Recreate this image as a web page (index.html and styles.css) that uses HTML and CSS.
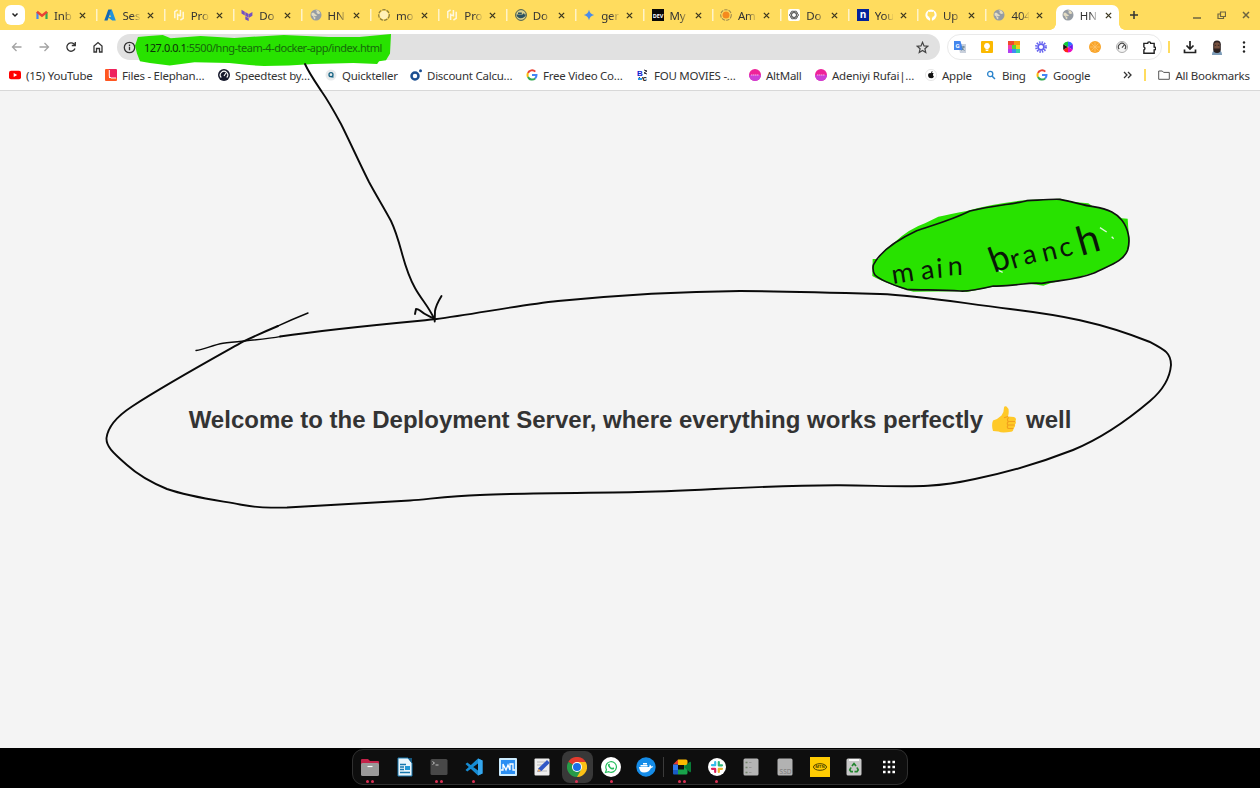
FILE: index.html
```html
<!DOCTYPE html>
<html lang="en">
<head>
<meta charset="utf-8">
<title>HNG</title>
<link rel="stylesheet" href="styles.css">
</head>
<body>
<svg class="defs" aria-hidden="true">
  <symbol id="x" viewBox="0 0 8 8"><path d="M1 1l6 6M7 1L1 7" fill="none" stroke="currentColor" stroke-width="1.5"/></symbol>
  <symbol id="globe" viewBox="0 0 12 12"><circle cx="6" cy="6" r="5.5" fill="#969ca3"/><path d="M1.6 4.2C3 3.6 4.500 3.800 4.800 5L7 6.200 6 7.200 3.500 6.800 5.500 8.500 5 10.500 3.600 9.200 3.300 7.400 1.500 6.300zM5.500 1.200L8.500 1.600 10.400 4.200 8.800 5 7.600 4.800 6.400 3.600 7 2.800z" fill="#e3dcc4"/></symbol>
  <symbol id="hashi" viewBox="0 0 12 12"><path d="M4.600 1L1.800 2.700V9.200M4.600 4.500V11M7.400 1v6.500M4.600 6.200h2.800M7.400 11l2.800-1.700V2.800" fill="none" stroke="#fff8df" stroke-width="1.500"/></symbol>
  <symbol id="google" viewBox="0 0 12 12"><g fill="none" stroke-width="2"><path d="M9.300 2.600A4.500 4.500 0 0 0 2 4" stroke="#ea4335"/><path d="M2 4a4.500 4.500 0 0 0 0 4" stroke="#fbbc05"/><path d="M2 8a4.500 4.500 0 0 0 7.100 1.400" stroke="#34a853"/><path d="M9.100 9.400A4.500 4.500 0 0 0 10.500 6H6" stroke="#4285f4"/></g></symbol>
  <symbol id="alt" viewBox="0 0 12 12"><circle cx="6" cy="6" r="6" fill="#ee2299"/><path d="M0 6h12a6 6 0 0 1-12 0" fill="#cc3fd6"/><path d="M2 6h8" stroke="#f7b6e6" stroke-width="1" stroke-dasharray="1.500 .5"/></symbol>
</svg>

<header class="browser">
  <div class="tabstrip">
    <button class="search-tabs"><svg width="8" height="6" viewBox="0 0 8 6"><path d="M1.500 1.500L4 4l2.500-2.500" fill="none" stroke="#222" stroke-width="1.500"/></svg></button>
    <div class="tabs">
      <div class="tab"><svg class="fav" viewBox="0 0 12 12"><path d="M1.500 10V3" stroke="#4285f4" stroke-width="2.200"/><path d="M10.500 10V3" stroke="#34a853" stroke-width="2.200"/><path d="M1 2.700L6 6.700l5-4" fill="none" stroke="#ea4335" stroke-width="2.400"/></svg><span>Inb</span><svg class="close"><use href="#x"/></svg></div>
      <div class="tab"><svg class="fav" viewBox="0 0 12 12"><path d="M4.300.5h3.500L3.500 11.500H.3z" fill="#1267b4"/><path d="M7.800.5l4 11H8.200L3.600 8h3.300L5.500 4z" fill="#2192dc"/></svg><span>Ses</span><svg class="close"><use href="#x"/></svg></div>
      <div class="tab"><svg class="fav"><use href="#hashi"/></svg><span>Pro</span><svg class="close"><use href="#x"/></svg></div>
      <div class="tab"><svg class="fav" viewBox="0 0 12 12" fill="#7350c4"><path d="M.5.8l3.300 2v3.700l-3.300-2zM4.300 3l3.400 2v3.700l-3.400-2zM8 5l3.400-2v3.700L8 8.700zM4.300 7.200l3.400 2V12l-3.400-1.500z"/></svg><span>Do</span><svg class="close"><use href="#x"/></svg></div>
      <div class="tab"><svg class="fav"><use href="#globe"/></svg><span>HN</span><svg class="close"><use href="#x"/></svg></div>
      <div class="tab"><svg class="fav" viewBox="0 0 12 12"><circle cx="6" cy="6" r="4.200" fill="#fff0b8"/><circle cx="6" cy="6" r="5.300" fill="none" stroke="#8a7c3e" stroke-width="1.200" stroke-dasharray="3.500 1"/></svg><span>mo</span><svg class="close"><use href="#x"/></svg></div>
      <div class="tab"><svg class="fav"><use href="#hashi"/></svg><span>Pro</span><svg class="close"><use href="#x"/></svg></div>
      <div class="tab"><svg class="fav" viewBox="0 0 12 12"><circle cx="6" cy="6" r="5.400" fill="#d9cf8d" stroke="#475d50"/><path d="M1.500 5.500h6l1.500-1.500.5 1.500h1.500C10 8.500 7.500 9.500 5 9.200 3 9 1.700 7.500 1.500 5.500zM3 4.900V3.600h3.800v1.300z" fill="#2b5262"/></svg><span>Do</span><svg class="close"><use href="#x"/></svg></div>
      <div class="tab"><svg class="fav" viewBox="0 0 12 12"><path d="M6 .8C6.800 4 8 5.200 11.200 6 8 6.800 6.800 8 6 11.200 5.200 8 4 6.800.8 6 4 5.200 5.200 4 6 .8z" fill="#4b8be8"/></svg><span>gen</span><svg class="close"><use href="#x"/></svg></div>
      <div class="tab"><svg class="fav" viewBox="0 0 12 12"><path fill="#080808" d="M0 0h12v12H0z"/><text x="6" y="8.500" class="dev">DEV</text></svg><span>My</span><svg class="close"><use href="#x"/></svg></div>
      <div class="tab"><svg class="fav" viewBox="0 0 12 12"><circle cx="6" cy="6" r="5.300" fill="none" stroke="#a08a4c" stroke-width="1.100" stroke-dasharray="3.500 1"/><circle cx="6" cy="6" r="3.500" fill="#f58a1f"/></svg><span>Am</span><svg class="close"><use href="#x"/></svg></div>
      <div class="tab"><svg class="fav" viewBox="0 0 12 12"><rect width="12" height="12" rx="2" fill="#fff"/><g fill="none" stroke="#444" stroke-width=".8"><ellipse cx="6" cy="6" rx="4.400" ry="2.300"/><ellipse cx="6" cy="6" rx="4.400" ry="2.300" transform="rotate(60 6 6)"/><ellipse cx="6" cy="6" rx="4.400" ry="2.300" transform="rotate(120 6 6)"/></g></svg><span>Do</span><svg class="close"><use href="#x"/></svg></div>
      <div class="tab"><svg class="fav" viewBox="0 0 12 12"><path fill="#03229c" d="M0 0h12v12H0z"/><text x="6" y="9" class="n">n</text></svg><span>You</span><svg class="close"><use href="#x"/></svg></div>
      <div class="tab"><svg class="fav" viewBox="0 0 12 12"><path d="M4.500 11.500V9.300C2.500 9.700 2.300 8.500 1.500 8.200M7.500 11.500V8.500" stroke="#fff" fill="none" stroke-width="1.200"/><path d="M4 11.300A5.600 5.600 0 1 1 8 11.300V9c0-.6-.2-1-.5-1.200C9.200 7.500 9.600 6.400 9.600 5.200c0-.6-.2-1-.6-1.400.1-.4.100-.9-.1-1.300-.5 0-1 .3-1.400.6a5 5 0 0 0-3 0C4.100 2.800 3.600 2.500 3.100 2.500c-.2.400-.2.900-.1 1.300-.4.400-.6.800-.6 1.400 0 1.200.4 2.300 2.100 2.600-.5.500-.5 1-.5 1.500z" fill="#fff"/></svg><span>Up</span><svg class="close"><use href="#x"/></svg></div>
      <div class="tab"><svg class="fav"><use href="#globe"/></svg><span>404</span><svg class="close"><use href="#x"/></svg></div>
      <div class="tab active"><svg class="fav"><use href="#globe"/></svg><span>HN</span><svg class="close"><use href="#x"/></svg></div>
    </div>
    <svg class="plus" viewBox="0 0 10 10"><path d="M5 1v8M1 5h8" stroke="#333" stroke-width="1.500"/></svg>
    <div class="window-buttons">
      <svg width="8" height="10"><path d="M0 8h8" stroke="#6e6541" stroke-width="1.500"/></svg>
      <svg width="9" height="10" fill="none" stroke="#6e6541" stroke-width="1.200"><path d="M3.500 2h5v4.500h-5zM3.500 4H1v4.500h5.500v-2"/></svg>
      <svg width="8" height="8" class="wclose"><use href="#x"/></svg>
    </div>
  </div>

  <div class="toolbar">
    <nav class="nav">
      <svg viewBox="0 0 12 12"><path d="M10.500 6H2M5.500 2L1.500 6l4 4" stroke="#a3a3a3"/></svg>
      <svg viewBox="0 0 12 12"><path d="M1.500 6H10M6.500 2l4 4-4 4" stroke="#a3a3a3"/></svg>
      <svg viewBox="0 0 12 12"><path d="M10 7.500A4.200 4.200 0 1 1 9 3L10.300 4.300M10.300 1v3.500H6.800" stroke="#333"/></svg>
      <svg viewBox="0 0 12 12"><path d="M2 11V5l4-3.500L10 5v6H7.500V7.500h-3V11z" stroke="#333"/></svg>
    </nav>
    <div class="omnibox">
      <svg class="marker" viewBox="0 0 258 34" preserveAspectRatio="none"><path d="M3 3L14 2 28 1 36 4.500 66 2 100 4 150 1 195 3 226 3 258 0 257 20 253 27 246 28 244 31 220 30 180 31 155 32.500 130 33 115 32 95 30 60 29 35 32.500 15 30 5 28 2 20 0 12z"/></svg>
      <svg class="info" viewBox="0 0 12 12"><circle cx="6" cy="6" r="4.800" fill="none" stroke="#333" stroke-width="1.200"/><path d="M6 5.400v3.200M6 3.200v1.300" stroke="#333" stroke-width="1.200"/></svg>
      <span class="url"><b>127.0.0.1</b>:5500/hng-team-4-docker-app/index.html</span>
      <svg class="star" viewBox="0 0 12 12"><path d="M6 1.200l1.400 3.300 3.500.3-2.700 2.300.8 3.500L6 8.700 3 10.600l.8-3.500L1.100 4.800l3.500-.3z" fill="none" stroke="#444" stroke-width="1.100"/></svg>
    </div>
    <div class="extensions">
      <svg viewBox="0 0 12 12"><path fill="#c9d0dc" d="M4 3h8v9H6z"/><path fill="#4386ee" d="M0 0h6.500l2.500 9H0z"/><text x="3.600" y="7" class="tr">G</text><path d="M7.500 6H11M9.200 5v1c0 1.500-1 3-1.700 3.500M8 7.500l2.500 2" fill="none" stroke="#607d8b" stroke-width=".8"/></svg>
      <svg viewBox="0 0 12 12"><rect width="12" height="12" rx="1" fill="#fbb900"/><path d="M6 2a3 3 0 0 0-1.500 5.600V8.500h3V7.600A3 3 0 0 0 6 2zM4.700 9.100h2.600v1H4.700z" fill="#fff"/></svg>
      <svg viewBox="0 0 12 12"><path fill="#f04a2a" d="M0 0h6v4H0z"/><path fill="#f79a10" d="M6 0h6v4H6z"/><path fill="#f23fae" d="M0 4h4v4H0z"/><path fill="#53d63c" d="M4 4h4v4H4z"/><path fill="#f4d31c" d="M8 4h4v4H8z"/><path fill="#b13ff0" d="M0 8h4v4H0z"/><path fill="#3e89f5" d="M4 8h4v4H4z"/><path fill="#35d6a5" d="M8 8h4v4H8z"/></svg>
      <svg viewBox="0 0 12 12"><circle cx="6" cy="6" r="4.700" fill="none" stroke="#6562ef" stroke-width="2.400" stroke-dasharray="1.400 1.060"/><circle cx="6" cy="6" r="2.900" fill="none" stroke="#6562ef" stroke-width="1.700"/></svg>
      <svg viewBox="0 0 12 12"><path d="M6 6V.5a5.500 5.500 0 0 1 4.800 2.800z" fill="#2a70ff"/><path d="M6 6l4.800-2.700v5.400z" fill="#6b18ef"/><path d="M6 6l4.800 2.700A5.500 5.500 0 0 1 6 11.500z" fill="#ea0bc0"/><path d="M6 6v5.500a5.500 5.500 0 0 1-4.800-2.800z" fill="#ff211b"/><path d="M6 6L1.200 8.700V3.300z" fill="#201414"/><path d="M6 6L1.200 3.300A5.500 5.500 0 0 1 6 .5z" fill="#0fcc39"/></svg>
      <svg viewBox="0 0 12 12"><circle cx="6" cy="6" r="6" fill="#f9a52b"/><g stroke="#ffc773" stroke-width=".7"><path d="M6 1v10M1 6h10M2.500 2.500l7 7M9.500 2.500l-7 7"/></g></svg>
      <svg viewBox="0 0 12 12"><circle cx="6" cy="6" r="5.500" fill="#f4f4f4" stroke="#999" stroke-width=".8"/><path d="M3.200 8.200a3.600 3.600 0 1 1 5.600 0M6 6.600L8.200 4" fill="none" stroke="#444" stroke-width="1.100"/></svg>
      <svg viewBox="0 0 12 12"><path d="M.8 2.200h3.500a1.400 1.400 0 0 1 2.800 0h3.200v3.300a1.400 1.400 0 0 1 0 2.800v3H.8V8.300a1.500 1.500 0 0 0 0-2.800z" fill="none" stroke="#222" stroke-width="1.300"/></svg>
    </div>
    <i class="bar"></i>
    <svg class="download" viewBox="0 0 14 14"><path d="M7 1v7.500M3.500 5.500L7 9l3.500-3.500M1.500 9.500v3h11v-3" fill="none" stroke="#222" stroke-width="1.700"/></svg>
    <svg class="avatar" viewBox="0 0 12 15"><path d="M1 15c0-4 2-5 5-5s5 1 5 5z" fill="#7d9cb8"/><rect x="2.200" y=".5" width="7.600" height="12.500" rx="3.800" fill="#2c2120"/><path d="M3.200 4.500c0-3 5.600-3 5.600 0V8.500H3.200z" fill="#77513f"/><path d="M3.700 5.300h1.500M6.800 5.300h1.500" stroke="#302421"/></svg>
    <svg class="dots" viewBox="0 0 4 12" fill="#222"><circle cx="2" cy="1.500" r="1.200"/><circle cx="2" cy="6" r="1.200"/><circle cx="2" cy="10.500" r="1.200"/></svg>
  </div>

  <div class="bookmarks">
    <a><svg viewBox="0 0 12 12"><rect y="1.700" width="12" height="8.600" rx="2" fill="#f00"/><path d="M4.700 4l3.500 2-3.500 2z" fill="#fff"/></svg><span>(15) YouTube</span></a>
    <a><svg viewBox="0 0 12 12"><path d="M0 1q0-1 1-1h3v9h8v2q0 1-1 1H1q-1 0-1-1z" fill="#ff5722"/><path d="M4 0h7q1 0 1 1v8H6L4 7z" fill="#ee225e"/><path d="M4.300 1v6.500L6 9h5" fill="none" stroke="#fff"/></svg><span>Files - Elephan…</span></a>
    <a><svg viewBox="0 0 12 12"><circle cx="6" cy="6" r="6" fill="#171a2d"/><path d="M3.300 8.500a3.700 3.700 0 1 1 5.400 0M6 7l2-3" fill="none" stroke="#fff" stroke-width="1.100"/></svg><span>Speedtest by…</span></a>
    <a><svg viewBox="0 0 12 12"><circle cx="6" cy="6" r="5.500" fill="#e9ebec"/><circle cx="6" cy="5.700" r="2" fill="none" stroke="#176383" stroke-width="1.300"/><path d="M6.500 8h2.200" stroke="#176383"/></svg><span>Quickteller</span></a>
    <a><svg viewBox="0 0 12 12"><circle cx="5" cy="7" r="3.500" fill="none" stroke="#1c4f91" stroke-width="2.500"/><circle cx="10.500" cy="1.700" r="1.500" fill="#1c4f91"/></svg><span>Discount Calcu…</span></a>
    <a><svg><use href="#google"/></svg><span>Free Video Co…</span></a>
    <a><svg viewBox="0 0 12 12"><text x="0" y="6.500" class="fou blue">B</text><text x="5.500" y="11.500" class="fou">c</text><path d="M7 1l3 1-3 2 3 1M2 8l2 3 2-3" stroke="#223" fill="none"/><path d="M1 9h4v2H1z" fill="#269ae8"/></svg><span>FOU MOVIES -…</span></a>
    <a><svg><use href="#alt"/></svg><span>AltMall</span></a>
    <a><svg><use href="#alt"/></svg><span>Adeniyi Rufai|…</span></a>
    <a><svg viewBox="0 0 12 12"><circle cx="6" cy="6" r="5.600" fill="#fff" stroke="#ddd" stroke-width=".7"/><path d="M6 4.200c.8-.5 2-.5 2.600.3-1 .8-.8 2.300.3 2.800C8.400 9 7.300 9.600 6 9 4.300 9.700 3.100 8 3.100 6.300 3.100 4.200 4.700 3.600 6 4.200zM6 3.800c0-1 .6-1.700 1.500-1.900.1 1-.6 1.800-1.500 1.900z" fill="#111"/></svg><span>Apple</span></a>
    <a><svg viewBox="0 0 12 12"><circle cx="5.200" cy="5" r="2.600" fill="none" stroke="#2b84cc" stroke-width="1.300"/><path d="M7 7l3 3" stroke="#2b84cc" stroke-width="1.500"/></svg><span>Bing</span></a>
    <a><svg><use href="#google"/></svg><span>Google</span></a>
    <svg class="more" viewBox="0 0 9 8"><path d="M1 1l3 3-3 3M5 1l3 3-3 3" fill="none" stroke="#333" stroke-width="1.300"/></svg>
    <i class="bar"></i>
    <a class="all"><svg viewBox="0 0 12 12"><path d="M.7 2h3.600l1.300 1.400h5.700v6.900H.7z" fill="none" stroke="#555"/></svg><span>All Bookmarks</span></a>
  </div>
</header>

<main class="page">
  <h1>Welcome to the Deployment Server, where everything works perfectly <svg class="thumb" viewBox="0 0 24 27"><path d="M1 14.500Q6 13 9.500 9.500 12 6.500 12 1.500 12.500-.3 14.500.6 18 3 16 10.500L22 11q3 1 1.500 4 1 2-.5 3.500.5 2.500-1.500 3.700 0 3.300-2.500 3.600Q10 27.500 6.500 25.600L1 25Q-.8 19 1 14.500z" fill="#ffc928"/><path d="M16 10.500l-4 1.200M16.500 15.500h6.500M16 19h6.500M16 22.500h5.500M16.800 11.500q-2.500 2-.5 4-2 2-.3 3.700-1.500 2 .2 3.500" fill="none" stroke="#f2a01d" stroke-width="1.100"/></svg> well</h1>
</main>

<footer class="desktop">
  <div class="dock">
    <div class="app"><svg viewBox="0 0 20 20"><path d="M1 3q0-1 1-1h6l2 2h8q1 0 1 1v4H1z" fill="#c42249"/><rect x="1" y="6" width="18" height="13" rx="1.500" fill="#9a9999"/><path d="M7.500 9.500h5" stroke="#fff" stroke-width="1.200"/></svg><b><i></i><i></i></b></div>
    <div class="app"><svg viewBox="0 0 20 20"><path d="M3 1h10l4 5v13H3z" fill="#eaf6fc" stroke="#1777ad"/><path d="M13 1h4v5z" fill="#16577e"/><path d="M5 7.500h6M5 10h4M5 12.500h4M5 15.500h10" stroke="#1777ad" stroke-width="1.300"/><path d="M10 9h5v4h-5z" fill="#2298d6"/></svg></div>
    <div class="app"><svg viewBox="0 0 20 20"><rect x="1.500" y="2" width="17" height="16" rx="1.500" fill="#484848"/><path d="M3.500 4.500l2 1.500-2 1.500M6.500 8h3" fill="none" stroke="#ccc" stroke-width=".9"/></svg><b><i></i><i></i></b></div>
    <div class="app"><svg viewBox="0 0 20 20"><path d="M14 1.500l4.500 2v13l-4.500 2L1.500 7l1.800-1.500L14 13.500v-7L3.300 14.500 1.500 13z" fill="#168bd2"/><path d="M14 1.500l4.500 2v13l-4.500 2z" fill="#35a6ed"/></svg><b><i></i></b></div>
    <div class="app"><svg viewBox="0 0 20 20"><rect x="1" y="1" width="18" height="18" rx="1" fill="#ccecff"/><path d="M3 3h14v14H3z" fill="#2a8ef3"/><path d="M3 13h2V7l3 6 2-5 2 5V7h3v6h2" fill="none" stroke="#fff" stroke-width="1.300"/></svg></div>
    <div class="app"><svg viewBox="0 0 20 20"><rect x="2.500" y="1.500" width="15" height="17" rx="1" fill="#eee"/><path d="M5 5h8M5 8h6M5 14h10" stroke="#bbb"/><path d="M5.500 15l1-3.700L15 3l2.800 2.800L9.500 14z" fill="#3058c6"/><path d="M5.500 15l1-3.500 2.500 2.500z" fill="#ecb36d"/></svg></div>
    <div class="app selected"><svg viewBox="0 0 20 20"><path d="M10 10L1.300 5A10 10 0 0 1 18.700 5z" fill="#e33b2e"/><path d="M10 10V5h8.700A10 10 0 0 1 10 20z" fill="#fbc116"/><path d="M10 10l4.300 2.500L10 20A10 10 0 0 1 1.300 5z" fill="#269b48"/><circle cx="10" cy="10" r="5" fill="#fff"/><circle cx="10" cy="10" r="4" fill="#1a70e8"/></svg><b><i></i></b></div>
    <div class="app"><svg viewBox="0 0 20 20"><circle cx="10" cy="10" r="10" fill="#fff"/><path d="M4.500 15.500l1-3A5.300 5.300 0 1 1 7.800 14.700z" fill="#fff" stroke="#25be5d" stroke-width="1.200"/><path d="M7.500 7q1-1 1.500.7l-.4.800q1 2 2.600 2.500l.8-.7q2 .7 1 1.700-2 1.500-4.500-1T7.500 7z" fill="#25be5d"/></svg><b><i></i></b></div>
    <div class="app"><svg viewBox="0 0 20 20"><circle cx="10" cy="10" r="9.700" fill="#158ce8"/><path d="M3 10h10q1-1 .5-2.500 1.500.5 1.800 2 1-.4 2 .1-.7 1.400-2.300 1.400Q13 15.500 8 15.500q-4.500 0-5-5.500zM4.500 8h7v1.500h-7zM7 6h4v1.500H7z" fill="#fff"/></svg></div>
    <div class="rule"></div>
    <div class="app"><svg viewBox="0 0 20 20"><path d="M6 2.500h8q1.500 0 1.500 1.500v4H6z" fill="#fbb900"/><path d="M1 7.500l5-5v5z" fill="#e73b30"/><path d="M1 7.500h5V13H1z" fill="#3078ed"/><path d="M1 13h5v4.500H2q-1 0-1-1z" fill="#195bc6"/><path d="M6 12.500h6V8h3.500v8q0 1.500-1.500 1.500H6z" fill="#18a34b"/><path d="M12 10l5.500-5q1.500-1 1.500 1v8q0 2-1.500 1z" fill="#087b36"/></svg><b><i></i><i></i></b></div>
    <div class="app"><svg viewBox="0 0 20 20"><circle cx="10" cy="10" r="9" fill="#fff"/><g stroke-width="2.200" stroke-linecap="round"><path d="M8.200 5v3M5 8.200h3.200" stroke="#36bdec"/><path d="M11.800 5v3.500M12 8.300h3" stroke="#2db67d"/><path d="M11.800 11.800H15M11.800 12v3" stroke="#ebb22e"/><path d="M8.200 12v3M5 11.800h3" stroke="#df1f5b"/></g></svg><b><i></i></b></div>
    <div class="app"><svg viewBox="0 0 20 20"><rect x="2.500" y="1.500" width="15" height="17" rx="1.500" fill="#b5b5b5"/><path d="M4.500 5.500H6.500M4.500 10.500H6.500M4.500 15.500H6.500" stroke="#72846a" stroke-width="1.400"/><path d="M8 5.500h2.500M8 10.500h2.500M8 15.500h2.500" stroke="#999"/></svg></div>
    <div class="app"><svg viewBox="0 0 20 20"><rect x="2.500" y="1.500" width="15" height="17" rx="1.500" fill="#b2b2b2"/><text x="10.500" y="17" class="ssd">SSD</text></svg></div>
    <div class="app"><svg viewBox="0 0 20 20"><path fill="#ffcc03" d="M0 0h20v20H0z"/><ellipse cx="10" cy="10" rx="6.500" ry="3.300" fill="none" stroke="#4b4000"/><text x="10" y="11.400" class="mtn">MTN</text></svg></div>
    <div class="app"><svg viewBox="0 0 20 20"><rect x="2.500" y="1.500" width="15" height="17" rx="1.500" fill="#c9c9c9"/><path d="M5 2h10v2H5z" fill="#f8f8f8"/><path d="M8 9l2-2.500L12 9M13 10.500l1.200 2.500-1.200 1.700h-2.500M9 14.700H7L5.800 13 7 10.500" fill="none" stroke="#23862f" stroke-width="1.700"/></svg></div>
    <div class="app"><svg viewBox="0 0 20 20"><path d="M4 5h12M4 10h12M4 15h12" stroke="#fff" stroke-width="2.600" stroke-dasharray="2.600 2.100"/></svg></div>
  </div>
</footer>

<svg class="ink" viewBox="0 0 1260 788">
  <g class="stroke">
    <path class="thin" d="M196 350.500C205 349 213 345 223 343.300C240 341 262 340 281 336.400"/>
    <path d="M280 336.500C330 329 385 324 434.700 319.300C480 313 520 305 558 301C620 295 680 291.500 740 291C790 291.300 830 292.500 880 294C920 295.500 960 303 1010 309C1060 315 1100 322 1150 342C1165 350 1171 353 1171 365C1170 377 1163 390 1150 401C1130 418 1102 438 1073 450C1045 461 1010 472 975 479C930 489 910 486 840 485.300C760 485 700 491 630 492.300C580 493 520 493 480 495C450 496 430 499 410 500.500C360 503 310 506 287 507.500C260 508 255 507 240 504.500C215 500 190 497 167 489C150 482 138 475 127 465C112 452 106 446 106.500 438C108 426 119 415 132 406.500C165 385 205 363 243 341.700C255 336 266 331 278 326"/>
    <path class="thin" d="M277 326.400Q293 319 308 313"/>
    <path d="M305 64C309 73 316 83 322 92C329 102 335 113 341 124C350 142 359 162 369 182C376 195 384 208 391 221C402 244 402 265 415 288C421 299 429 307 434 318.500"/>
    <path d="M415 314L416 309Q418 309 420 310.500C425 315 429 316 434.500 319"/><path d="M441.500 296Q436 305 435 311L434.700 321.500"/>
  </g>
  <g transform="translate(860 190) scale(.33333)">
    <path class="green" d="M38 207L55 207Q75 175 102 158Q150 115 195 100L235 80Q270 73 320 63Q400 40 500 30L600 26 640 36 685 40 700 50Q750 55 785 85L803 86 806 130Q813 155 803 182Q785 220 700 248L660 260 575 278 550 287 500 280 430 289 400 290 320 306 300 304 160 305 130 297Q70 275 48 264L37 258z"/>
    <path class="outline" d="M40 225C60 185 110 150 170 122C220 105 270 92 330 63C400 45 470 42 500 32C540 30 570 27 600 28C640 35 670 47 700 50C750 58 770 72 785 90C805 115 812 150 803 180C790 215 750 225 700 250C650 270 600 270 545 280C500 275 470 290 400 288C350 300 320 305 300 303C250 300 200 300 140 298C100 285 60 270 45 255C38 245 38 235 40 225z"/>
    <path class="scratch" d="M720 113l20 13M755 140l6 6M413 240l15 7"/>
  </g>
  <text class="note" x="893 922 937 948" y="284 280 278 275.500" rotate="-9 -9 -4 -2">main</text>
  <text class="note" x="994 1013 1025 1044 1062 1081" y="273 269 265 262 258 256" rotate="-20 -17 -15 -14 -18 -16"><tspan class="b">b</tspan>ranc<tspan class="h">h</tspan></text>
</svg>
</body>
</html>
```
FILE: styles.css
```css
* { box-sizing: border-box; }
body { margin: 0; width: 1260px; height: 788px; overflow: hidden; display: flex; flex-direction: column; background: #f4f4f4; font-family: "Noto Sans", sans-serif; font-size: 11.500px; color: #333; position: relative; }
.defs { position: absolute; width: 0; height: 0; }
svg { display: block; flex: none; }
.browser { height: 91px; background: #fff; border-bottom: 1px solid #d8d8d8; flex: none; }
.tabstrip { height: 30px; background: #ffdc5e; display: flex; align-items: center; }
.search-tabs { width: 20px; height: 20px; margin: 0 5.500px 0 5px; padding: 0; border: 0; border-radius: 6px; background: #fff; display: grid; place-items: center; }
.tabs { display: flex; align-self: stretch; }
.tab { width: 68.400px; flex: none; display: flex; align-items: center; padding-left: 5.500px; background: linear-gradient(#fff3c8, #fff3c8) 65.500px center / 1.500px 12px no-repeat; }
.tab:nth-child(15) { background: none; }
.tab.active { position: relative; background: #fff; border-radius: 7px 7px 0 0; width: 63px; margin-top: 5px; padding: 0 0 5px 5.500px; }
.active::before, .active::after { content: ""; position: absolute; bottom: 0; width: 6px; height: 6px; }
.active::before { left: -6px; background: radial-gradient(circle at 0 0, transparent 5.500px, #fff 6px); }
.active::after { right: -6px; background: radial-gradient(circle at 100% 0, transparent 5.500px, #fff 6px); }
.fav { width: 12px; height: 12px; }
.tab span { width: 18px; margin: 0 7px 0 6px; overflow: hidden; white-space: nowrap; letter-spacing: -.15px; -webkit-mask-image: linear-gradient(90deg, #000 55%, transparent 105%); mask-image: linear-gradient(90deg, #000 55%, transparent 105%); }
.close { width: 7px; height: 7px; color: #3c371f; }
.plus { width: 10px; height: 10px; margin-left: 10px; }
.window-buttons { margin-left: auto; display: flex; gap: 16px; align-items: center; padding-right: 10px; }
.wclose { color: #6e6541; }
.toolbar { height: 34px; display: flex; align-items: center; background: #fff; border-radius: 7px 7px 0 0; }
.nav { display: flex; gap: 15px; padding-left: 11px; width: 117px; }
.nav svg { width: 12px; height: 12px; fill: none; stroke-width: 1.300; }
.omnibox { position: relative; width: 823px; height: 26px; border-radius: 13px; background: #e1e1e1; display: flex; align-items: center; padding: 0 11px 0 6px; }
.marker { position: absolute; left: 18px; top: 0; width: 256px; height: 33px; fill: #28e200; }
.info { width: 13px; height: 13px; }
.url { position: relative; margin-left: 8px; color: #16680b; white-space: nowrap; font-size: 11px; letter-spacing: -.48px; }
.url b { font-weight: 400; color: #0c3108; }
.star { width: 13px; height: 13px; margin-left: auto; }
.extensions { margin-left: 7px; width: 215px; height: 26px; border: 1px solid #e9e9e9; border-radius: 13px; display: flex; align-items: center; justify-content: space-between; padding: 0 5px 0 6px; }
.extensions svg { width: 12px; height: 12px; }
.extensions svg:last-child { width: 13px; height: 13px; }
.bar { width: 1.500px; height: 12px; background: #ffdc5e; }
.toolbar .bar { margin-left: 6px; }
.download { width: 14px; height: 14px; margin-left: 13px; }
.avatar { width: 12px; height: 15px; margin-left: 14px; }
.dots { width: 4px; height: 12px; margin-left: 19px; }
.bookmarks { height: 22px; display: flex; align-items: center; padding-left: 9px; letter-spacing: -.25px; }
.bookmarks a { display: flex; align-items: center; gap: 5px; width: 96px; white-space: nowrap; flex: none; }
.bookmarks a svg { width: 12px; height: 12px; }
.bookmarks a:nth-child(2) { width: 113px; }
.bookmarks a:nth-child(3) { width: 107px; }
.bookmarks a:nth-child(4) { width: 85px; }
.bookmarks a:nth-child(5) { width: 116px; }
.bookmarks a:nth-child(6) { width: 111px; }
.bookmarks a:nth-child(7) { width: 112px; }
.bookmarks a:nth-child(8) { width: 66px; }
.bookmarks a:nth-child(9) { width: 110px; }
.bookmarks a:nth-child(10) { width: 60px; }
.bookmarks a:nth-child(11) { width: 51px; }
.bookmarks a:nth-child(12) { width: 79px; }
.bookmarks .more { width: 9px; height: 8px; margin-left: 8px; }
.bookmarks .bar { margin: 0 12px 0 12px; }
.bookmarks .all { gap: 6px; width: 92px; }
.dev { font: 700 5.500px "Open Sans", sans-serif; text-anchor: middle; fill: #fff; }
.n { font: 700 10px "Open Sans", sans-serif; text-anchor: middle; fill: #fff; }
.tr { font: 700 6px Roboto, sans-serif; text-anchor: middle; fill: #fff; }
.fou { font: 700 8px "Liberation Sans", sans-serif; fill: #111; }
.fou.blue { fill: #1022cf; }
.page { height: 657px; display: flex; align-items: center; justify-content: center; background: #f4f4f4; flex: none; }
.page h1 { margin: 0; font: 700 24px "Liberation Sans", Arial, sans-serif; color: #333; white-space: nowrap; }
.thumb { display: inline-block; width: 26px; height: 27px; margin: 0 2px 0 1.500px; vertical-align: -5px; }
.desktop { height: 40px; background: #000; display: flex; justify-content: center; padding-top: 1px; flex: none; }
.dock { width: 556px; height: 36px; border: 1px solid #303030; border-radius: 11px; background: #0e0e0e; display: flex; align-items: center; }
.app { width: 34.450px; height: 34px; display: grid; place-items: center; position: relative; flex: none; }
.app svg { width: 20px; height: 20px; position: relative; }
.app.selected::before { content: ""; position: absolute; left: 2px; top: 1px; width: 31px; height: 32px; border-radius: 8px; background: #383838; }
.app b { position: absolute; bottom: 1px; display: flex; gap: 1.500px; }
.app i { width: 3px; height: 3px; border-radius: 50%; background: #dc3155; }
.rule { width: 1px; height: 20px; margin: 0 1px 0 0; background: #3b3b3b; flex: none; }
.ssd { font: 6.500px "Open Sans", sans-serif; text-anchor: middle; fill: #777; }
.mtn { font: 700 4px "Open Sans", sans-serif; text-anchor: middle; fill: #4b4000; }
.ink { position: absolute; left: 0; top: 0; width: 1260px; height: 788px; pointer-events: none; }
.stroke path { fill: none; stroke: #0a0a0a; stroke-width: 1.900; stroke-linecap: round; stroke-linejoin: round; }
.stroke .thin { stroke-width: 1.400; }
.green { fill: #28e200; }
.outline { fill: none; stroke: #101010; stroke-width: 5; }
.scratch { fill: none; stroke: #dff8db; stroke-width: 4; }
.note { font: 27px Lato, sans-serif; fill: #0a1608; }
.note .b { font-size: 35px; }
.note .h { font-size: 40px; }
```
